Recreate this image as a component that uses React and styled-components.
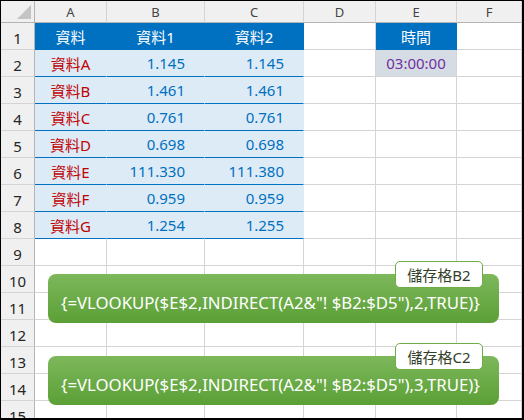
import React from 'react';
import styled, { createGlobalStyle } from 'styled-components';

const GlobalStyle = createGlobalStyle`
  html, body {
    margin: 0;
    padding: 0;
    background: #ffffff;
  }
  * {
    box-sizing: border-box;
  }
`;

const columns = ['A', 'B', 'C', 'D', 'E', 'F'];

const tableRows = [
  ['資料', '資料1', '資料2'],
  ['資料A', '1.145', '1.145'],
  ['資料B', '1.461', '1.461'],
  ['資料C', '0.761', '0.761'],
  ['資料D', '0.698', '0.698'],
  ['資料E', '111.330', '111.380'],
  ['資料F', '0.959', '0.959'],
  ['資料G', '1.254', '1.255'],
];

const formulas = [
  { label: '儲存格B2', text: '{=VLOOKUP($E$2,INDIRECT(A2&"! $B2:$D5"),2,TRUE)}', top: 273 },
  { label: '儲存格C2', text: '{=VLOOKUP($E$2,INDIRECT(A2&"! $B2:$D5"),3,TRUE)}', top: 355 },
];

const BLUE = '#0070C0';
const GRID = '#D4D4D4';

const Frame = styled.div`
  width: 524px;
  height: 420px;
  border: 1px solid #000;
  border-right-width: 2px;
  border-bottom-width: 2px;
  overflow: hidden;
  position: relative;
  font-family: 'Noto Sans', 'Noto Sans CJK TC', sans-serif;
`;

const Sheet = styled.div`
  display: grid;
  grid-template-columns: 34px 72px 98px 99px 72px 81px 1fr;
  grid-template-rows: 22px repeat(15, 27px);
`;

const Corner = styled.div`
  background: #f0f0f0;
  border-right: 1px solid #b4b4b4;
  border-bottom: 1px solid #b4b4b4;
  display: flex;
  align-items: flex-end;
  justify-content: flex-end;
  padding: 0 3px 3px 0;
`;

const CornerMark = styled.div`
  width: 14px;
  height: 14px;
  background: #c4c4c4;
  clip-path: polygon(100% 0, 100% 100%, 0 100%);
`;

const ColHead = styled.div`
  background: #f0f0f0;
  border-right: 1px solid ${GRID};
  border-bottom: 1px solid #b4b4b4;
  display: flex;
  align-items: center;
  justify-content: center;
  font-size: 13px;
  color: #444;
`;

const RowHead = styled.div`
  background: #f0f0f0;
  border-right: 1px solid #b4b4b4;
  border-bottom: 1px solid ${GRID};
  display: flex;
  align-items: center;
  justify-content: center;
  padding-top: 4px;
  font-size: 15px;
  color: #262626;
`;

const Cell = styled.div`
  background: ${(p) => p.$fill || '#fff'};
  border-right: 1px solid ${(p) => p.$vline || GRID};
  border-bottom: 1px solid ${(p) => p.$hline || GRID};
  display: flex;
  align-items: center;
  justify-content: ${(p) => (p.$right ? 'flex-end' : 'center')};
  padding-right: ${(p) => (p.$right ? '19px' : '0')};
  font-size: 15px;
  color: ${(p) => p.$color || '#000'};
  white-space: nowrap;
`;

const Callout = styled.div`
  position: absolute;
  left: 47px;
  width: 451px;
  height: 49px;
  border-radius: 8px;
  background: linear-gradient(#7db85b, #5b9f36);
  display: flex;
  align-items: center;
  padding: 7px 0 0 13px;
  color: #fff;
  font-size: 16.8px;
  white-space: nowrap;
`;

const Tag = styled.div`
  position: absolute;
  left: 347px;
  top: -13px;
  width: 88px;
  height: 27px;
  background: #fff;
  border: 1px solid #70ad47;
  border-radius: 5px;
  display: flex;
  align-items: center;
  justify-content: center;
  font-size: 15px;
  color: #33402a;
`;

function tableCell(r, c) {
  if (r <= 8 && c <= 2) {
    const value = tableRows[r - 1][c];
    if (r === 1) {
      return <Cell $fill={BLUE} $vline={BLUE} $hline={BLUE} $color="#fff">{value}</Cell>;
    }
    return (
      <Cell
        $fill="#DDEBF7"
        $vline="#DDEBF7"
        $hline={BLUE}
        $color={c === 0 ? '#C00000' : BLUE}
        $right={c > 0}
      >
        {value}
      </Cell>
    );
  }
  if (c === 4 && r === 1) {
    return <Cell $fill={BLUE} $vline={BLUE} $hline={BLUE} $color="#fff">時間</Cell>;
  }
  if (c === 4 && r === 2) {
    return <Cell $fill="#D6DCE4" $color="#7030A0">03:00:00</Cell>;
  }
  return <Cell />;
}

export default function App() {
  const rows = Array.from({ length: 15 }, (_, i) => i + 1);

  return (
    <>
      <GlobalStyle />
      <Frame>
        <Sheet>
          <Corner>
            <CornerMark />
          </Corner>
          {columns.map((col) => (
            <ColHead key={col}>{col}</ColHead>
          ))}
          {rows.map((r) => (
            <React.Fragment key={r}>
              <RowHead>{r}</RowHead>
              {columns.map((col, c) => (
                <React.Fragment key={col}>{tableCell(r, c)}</React.Fragment>
              ))}
            </React.Fragment>
          ))}
        </Sheet>
        {formulas.map((f) => (
          <Callout key={f.label} style={{ top: f.top }}>
            {f.text}
            <Tag>{f.label}</Tag>
          </Callout>
        ))}
      </Frame>
    </>
  );
}
